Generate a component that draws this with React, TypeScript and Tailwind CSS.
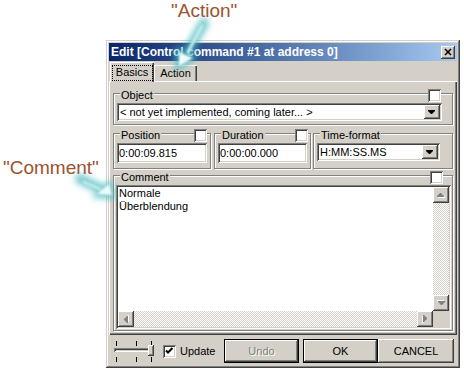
import React from 'react';

const raised =
  'shadow-[inset_-1px_-1px_#404040,inset_1px_1px_#ffffff,inset_-2px_-2px_#808080,inset_2px_2px_#d4d0c8]';
const sunken =
  'shadow-[inset_1px_1px_#808080,inset_-1px_-1px_#ffffff,inset_2px_2px_#404040,inset_-2px_-2px_#d4d0c8]';
const checker =
  'bg-[repeating-conic-gradient(#ffffff_0%_25%,#d4d0c8_0%_50%)] bg-[length:2px_2px]';

type Dir = 'up' | 'down' | 'left' | 'right';

function Arrow({ dir, color }: { dir: Dir; color: string }) {
  const rot = { up: 0, right: 90, down: 180, left: 270 }[dir];
  return (
    <svg width="16" height="16" viewBox="0 0 16 16" className="absolute left-0 top-0">
      <g transform={`rotate(${rot} 8 8)`}>
        {color !== '#000000' && (
          <polygon points="8,7 9,7 12,10 12,11 5,11 5,10" fill="#ffffff" />
        )}
        <polygon points="7,6 8,6 11,9 11,10 4,10 4,9" fill={color} />
      </g>
    </svg>
  );
}

function ScrollBtn({ dir }: { dir: Dir }) {
  return (
    <div className={`relative h-[16px] w-[16px] shrink-0 bg-[#d4d0c8] ${raised}`}>
      <Arrow dir={dir} color="#808080" />
    </div>
  );
}

function DropBtn() {
  return (
    <div className={`relative h-full w-[16px] shrink-0 bg-[#d4d0c8] ${raised}`}>
      <svg width="16" height="14" viewBox="0 0 16 14" className="absolute left-0 top-0">
        <polygon points="4,5 11,5 11,6 8,9 7,9 4,6" fill="#000000" />
      </svg>
    </div>
  );
}

function Check({ checked }: { checked?: boolean }) {
  return (
    <div className={`relative h-[13px] w-[13px] bg-white ${sunken}`}>
      {checked && (
        <svg width="13" height="13" viewBox="0 0 13 13" className="absolute left-0 top-0">
          <path d="M3 5.5 L5 7.5 L9.5 3" stroke="#000000" strokeWidth="2" fill="none" />
        </svg>
      )}
    </div>
  );
}

function Group({
  label,
  checkRight,
  className,
  children,
}: {
  label: string;
  checkRight: string;
  className: string;
  children: React.ReactNode;
}) {
  return (
    <div className={`relative border border-[#808080] shadow-[inset_1px_1px_#ffffff,1px_1px_#ffffff] ${className}`}>
      <span className="absolute -top-[5px] left-[6px] bg-[#d4d0c8] px-[1px] leading-[13px]">{label}</span>
      <div className={`absolute -top-[5px] ${checkRight}`}>
        <Check />
      </div>
      {children}
    </div>
  );
}

function Combo({ value }: { value: string }) {
  return (
    <div className={`flex h-[18px] bg-white p-[2px] ${sunken}`}>
      <span className="flex-1 truncate pl-[1px] leading-[14px]">{value}</span>
      <DropBtn />
    </div>
  );
}

function Field({ value }: { value: string }) {
  return (
    <div className={`flex h-[20px] items-center bg-white px-[2px] ${sunken}`}>
      <span className="leading-[13px]">{value}</span>
    </div>
  );
}

function Button({ label, def, disabled }: { label: string; def?: boolean; disabled?: boolean }) {
  const border = def
    ? 'shadow-[inset_0_0_0_1px_#000000,inset_-2px_-2px_#404040,inset_2px_2px_#ffffff,inset_-3px_-3px_#808080]'
    : raised;
  return (
    <div className={`flex h-[24px] items-center justify-center bg-[#d4d0c8] ${border}`}>
      <span className={disabled ? 'text-[#808080] [text-shadow:1px_1px_0_#ffffff]' : ''}>{label}</span>
    </div>
  );
}

function Slider() {
  return (
    <div className="relative h-[21px] w-[41px]">
      {[3, 23, 38].map((x) => (
        <React.Fragment key={x}>
          <div className="absolute top-0 h-[5px] w-[1px] bg-black" style={{ left: x }} />
          <div className="absolute bottom-0 h-[5px] w-[1px] bg-black" style={{ left: x }} />
        </React.Fragment>
      ))}
      <div className={`absolute left-[1px] top-[7px] h-[4px] w-[36px] bg-[#d4d0c8] ${sunken}`} />
      <div className={`absolute left-[35px] top-[4px] h-[11px] w-[6px] bg-[#d4d0c8] ${raised}`} />
    </div>
  );
}

export default function App() {
  return (
    <div className="relative h-[372px] w-[464px] overflow-hidden bg-white font-['Liberation_Sans',Arial,sans-serif] text-[11px] leading-[13px] text-black">
      <div className="ml-[106px] mt-[40px] flex h-[328px] w-[354px] flex-col bg-[#d4d0c8] p-[3px] shadow-[inset_-1px_-1px_#404040,inset_1px_1px_#d4d0c8,inset_-2px_-2px_#808080,inset_2px_2px_#ffffff]">
        {/* Title bar */}
        <div className="flex h-[18px] shrink-0 items-center justify-between bg-gradient-to-r from-[#0a246a] to-[#a6caf0] pl-[2px] pr-[2px]">
          <span className="text-[12px] font-bold leading-[14px] text-white">
            Edit [Control command #1 at address 0]
          </span>
          <div className={`relative h-[13px] w-[14px] bg-[#d4d0c8] ${raised}`}>
            <svg width="14" height="13" viewBox="0 0 14 13" className="absolute left-0 top-0">
              <path d="M4 3 L10 9 M10 3 L4 9" stroke="#000000" strokeWidth="1.6" />
            </svg>
          </div>
        </div>

        {/* Tabs */}
        <div className="mt-[1px] flex h-[19px] shrink-0 items-end pl-[1px]">
          <div className="relative z-10 -mb-[1px] flex h-[20px] w-[44px] items-center justify-center bg-[#d4d0c8] pt-[1px] shadow-[inset_1px_1px_#ffffff,inset_-1px_0_#404040,inset_-2px_0_#808080]">
            <span className="absolute bottom-[1px] left-[2px] right-[1px] top-[3px] border border-dotted border-black" />
            <span>Basics</span>
          </div>
          <div className="flex h-[16px] w-[43px] items-center justify-center bg-[#d4d0c8] shadow-[inset_1px_1px_#ffffff,inset_-1px_0_#404040,inset_-2px_0_#808080]">
            <span>Action</span>
          </div>
        </div>

        {/* Tab panel */}
        <div className="flex h-[254px] shrink-0 flex-col px-[4px] pb-[4px] pt-[12px] shadow-[inset_1px_1px_#ffffff,inset_-1px_-1px_#404040,inset_-2px_-2px_#808080]">
          <Group label="Object" checkRight="right-[11px]" className="pb-[3px] pl-[3px] pr-[10px] pt-[9px]">
            <Combo value="< not yet implemented, coming later... >" />
          </Group>

          <div className="mt-[8px] flex">
            <Group label="Position" checkRight="right-[3px]" className="w-[98px] px-[3px] pb-[5px] pt-[9px]">
              <Field value="0:00:09.815" />
            </Group>
            <Group label="Duration" checkRight="right-[2px]" className="ml-[3px] w-[97px] px-[3px] pb-[5px] pt-[9px]">
              <Field value="0:00:00.000" />
            </Group>
            <Group label="Time-format" checkRight="hidden" className="ml-[2px] flex-1 pb-[5px] pl-[3px] pr-[12px] pt-[9px]">
              <Combo value="H:MM:SS.MS" />
            </Group>
          </div>

          <Group label="Comment" checkRight="right-[9px]" className="mt-[6px] pb-[1px] pl-[2px] pr-[1px] pt-[9px]">
            <div className={`grid h-[144px] grid-cols-[1fr_16px] grid-rows-[1fr_16px] bg-white p-[2px] ${sunken}`}>
              <div className="pl-[1px] leading-[13px]">
                <div>Normale</div>
                <div>Überblendung</div>
              </div>
              <div className="flex flex-col">
                <ScrollBtn dir="up" />
                <div className={`flex-1 ${checker}`} />
                <ScrollBtn dir="down" />
              </div>
              <div className="flex">
                <ScrollBtn dir="left" />
                <div className={`flex-1 ${checker}`} />
                <ScrollBtn dir="right" />
              </div>
              <div className="bg-[#d4d0c8]" />
            </div>
          </Group>
        </div>

        {/* Bottom bar */}
        <div className="flex h-[30px] shrink-0 items-center pb-[2px] pl-[4px] pr-[3px] pt-[4px]">
          <Slider />
          <div className="ml-[9px]">
            <Check checked />
          </div>
          <span className="ml-[4px]">Update</span>
          <div className="ml-auto flex">
            <div className="mr-[4px] w-[75px]">
              <Button label="Undo" def disabled />
            </div>
            <div className="w-[75px]">
              <Button label="OK" def />
            </div>
            <div className="w-[76px]">
              <Button label="CANCEL" />
            </div>
          </div>
        </div>
      </div>

      {/* Annotations */}
      <span className="absolute left-[171px] top-0 text-[19px] leading-[22px] text-[#a0522d]">{'"Action"'}</span>
      <span className="absolute left-[3px] top-[157px] text-[19px] leading-[22px] text-[#a0522d]">{'"Comment"'}</span>

      <svg width="464" height="372" className="pointer-events-none absolute left-0 top-0">
        <defs>
          <filter id="glow" x="-50%" y="-50%" width="200%" height="200%">
            <feGaussianBlur stdDeviation="3" />
          </filter>
          <filter id="soft" x="-50%" y="-50%" width="200%" height="200%">
            <feGaussianBlur stdDeviation="1.2" />
          </filter>
        </defs>
        <g filter="url(#glow)" opacity="0.75">
          <line x1="204" y1="23" x2="187" y2="53" stroke="#48b9c0" strokeWidth="10" strokeLinecap="round" />
          <polygon points="175,72 175,47 199,58" fill="#48b9c0" />
          <line x1="80" y1="179" x2="101" y2="189" stroke="#48b9c0" strokeWidth="10" strokeLinecap="round" />
          <polygon points="111,179 116,199 91,198" fill="#48b9c0" />
        </g>
        <g filter="url(#soft)">
          <line x1="202" y1="26" x2="188" y2="52" stroke="#c4eeee" strokeWidth="3" strokeLinecap="round" />
          <polygon points="179,66 179,52 193,58" fill="#f0fcfc" />
          <line x1="84" y1="182" x2="100" y2="189" stroke="#c4eeee" strokeWidth="3" strokeLinecap="round" />
          <polygon points="109,184 112,195 97,194" fill="#f0fcfc" />
        </g>
      </svg>
    </div>
  );
}
